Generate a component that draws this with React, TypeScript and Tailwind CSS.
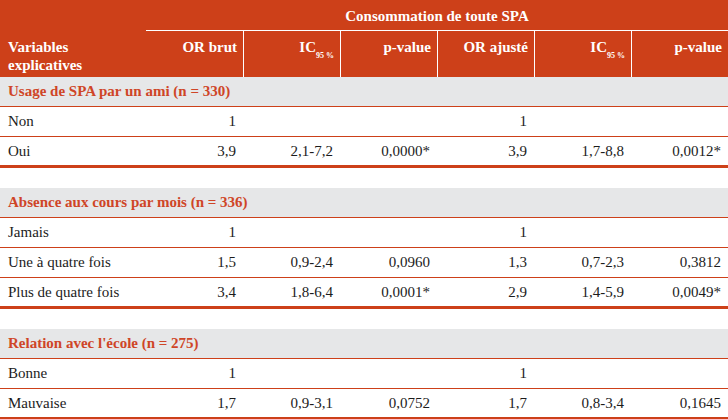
import React from "react";

type Row = { label: string; v: string[] };
type Section = { title: string; rows: Row[] };

const sections: Section[] = [
  {
    title: "Usage de SPA par un ami (n = 330)",
    rows: [
      { label: "Non", v: ["1", "", "", "1", "", ""] },
      { label: "Oui", v: ["3,9", "2,1-7,2", "0,0000*", "3,9", "1,7-8,8", "0,0012*"] },
    ],
  },
  {
    title: "Absence aux cours par mois (n = 336)",
    rows: [
      { label: "Jamais", v: ["1", "", "", "1", "", ""] },
      { label: "Une à quatre fois", v: ["1,5", "0,9-2,4", "0,0960", "1,3", "0,7-2,3", "0,3812"] },
      { label: "Plus de quatre fois", v: ["3,4", "1,8-6,4", "0,0001*", "2,9", "1,4-5,9", "0,0049*"] },
    ],
  },
  {
    title: "Relation avec l'école (n = 275)",
    rows: [
      { label: "Bonne", v: ["1", "", "", "1", "", ""] },
      { label: "Mauvaise", v: ["1,7", "0,9-3,1", "0,0752", "1,7", "0,8-3,4", "0,1645"] },
    ],
  },
];

const grid = "grid grid-cols-[146px_repeat(6,97px)]";

function IC() {
  return (
    <span>
      IC<sub className="text-[8px] align-[-4px] leading-none">95 %</sub>
    </span>
  );
}

export default function App() {
  const headers: React.ReactNode[] = ["OR brut", <IC key="a" />, "p-value", "OR ajusté", <IC key="b" />, "p-value"];
  return (
    <div
      className="w-[728px] h-[419px] bg-white text-[15px] text-[#1c1c1c] overflow-hidden"
      style={{ fontFamily: '"Liberation Serif", "Times New Roman", serif' }}
    >
      {/* Header */}
      <div className="bg-[#cd4019] text-white font-bold">
        <div className="flex h-[31px]">
          <div className="w-[146px]" />
          <div className="flex-1 flex items-start justify-center pt-[5px] border-b border-white">
            Consommation de toute SPA
          </div>
        </div>
        <div className={`${grid} h-[46px]`}>
          <div className="pl-[8px] pt-[7px] leading-[18px]">
            Variables
            <br />
            explicatives
          </div>
          {headers.map((h, i) => (
            <div
              key={i}
              className={`text-right pr-[6px] pt-[7px] leading-[18px] ${i > 0 ? "border-l border-white" : ""}`}
            >
              {h}
            </div>
          ))}
        </div>
      </div>

      {sections.map((s, si) => (
        <div key={si} className={si > 0 ? "mt-[20px]" : ""}>
          <div className="h-[30px] bg-[#e6e7e8] border-b border-[#cd4019] flex items-center pl-[8px] font-bold text-[#cf4527]">
            {s.title}
          </div>
          {s.rows.map((r, ri) => {
            const last = ri === s.rows.length - 1;
            return (
              <div
                key={ri}
                className={`${grid} ${last ? "h-[31px] border-b-[3px]" : "h-[30px] border-b"} border-[#cd4019]`}
              >
                <div className="flex items-center pl-[8px]">{r.label}</div>
                {r.v.map((v, vi) => (
                  <div key={vi} className="flex items-center justify-end pr-[7px]">
                    {v}
                  </div>
                ))}
              </div>
            );
          })}
        </div>
      ))}
    </div>
  );
}
